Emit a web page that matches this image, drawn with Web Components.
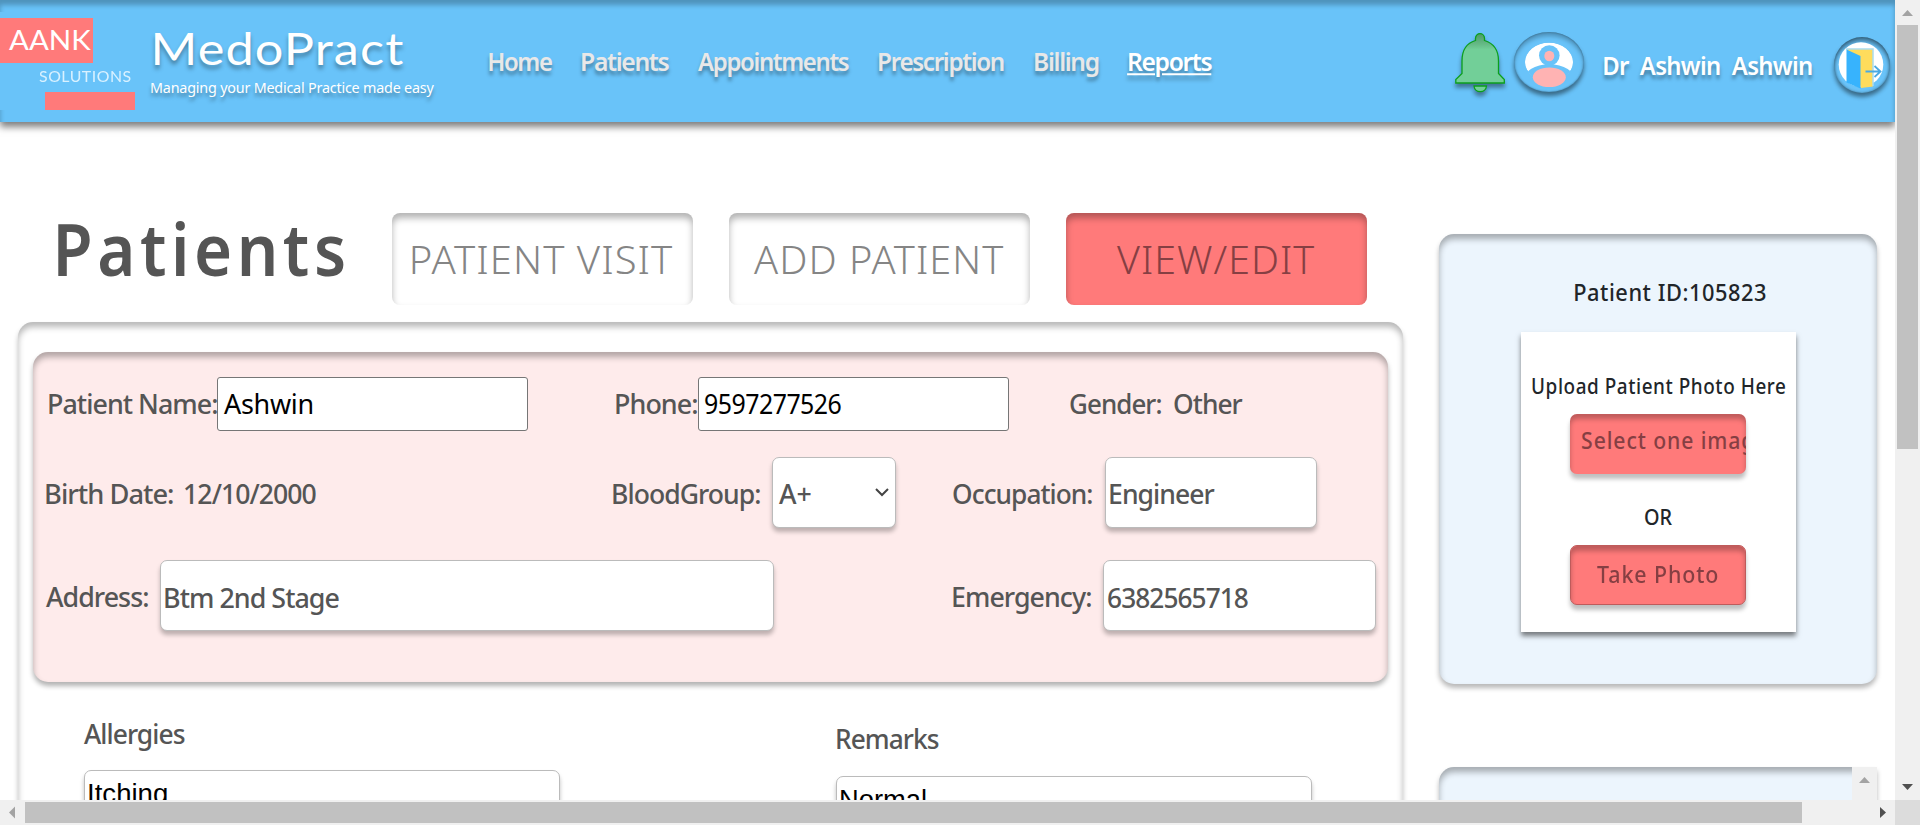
<!DOCTYPE html>
<html lang="en">
<head>
<meta charset="utf-8">
<title>MedoPract - Patients</title>
<style>
html,body{margin:0;height:100%;overflow:hidden;background:#fff}
body{font-family:"Noto Sans","Open Sans",sans-serif;color:#555}
</style>
</head>
<body>
<medo-app></medo-app>
<script>
const ctx = document.createElement('canvas').getContext('2d');

/* A caption sized by its cap height and set to a given ink width. */
class FitText extends HTMLElement {
  connectedCallback() {
    if (this.shadowRoot) return;
    const root = this.attachShadow({mode: 'open'});
    root.innerHTML = `<style>
      :host{display:block;flex:none;white-space:nowrap}
      span{display:inline-block;transform-origin:0 50%;vertical-align:top}
      :host([underline]) span{text-decoration:underline 2px;text-underline-offset:2px}
    </style><span><slot></slot></span>`;
    const w = +this.getAttribute('w'), cap = +this.getAttribute('cap');
    const cs = getComputedStyle(this);
    const font = s => `${cs.fontWeight} ${s}px ${cs.fontFamily}`;
    ctx.font = font(100);
    const size = cap / (ctx.measureText('H').actualBoundingBoxAscent / 100);
    ctx.font = font(size);
    const ls = parseFloat(this.getAttribute('ls') || 0);
    const ws = parseFloat(this.getAttribute('ws') || 0);
    ctx.letterSpacing = ls + 'px';
    ctx.wordSpacing = ws + 'px';
    const m = ctx.measureText(this.textContent);
    ctx.letterSpacing = ctx.wordSpacing = '0px';
    const left = -m.actualBoundingBoxLeft, ink = m.actualBoundingBoxRight - left;
    const sx = w / ink;
    const dy = cap / 2 - (m.fontBoundingBoxAscent - m.fontBoundingBoxDescent) / 2;
    this.style.width = w + 'px';
    this.style.height = cap + 'px';
    const sp = root.querySelector('span');
    sp.style.cssText = `font-size:${size}px;line-height:${cap}px;letter-spacing:${ls}px;word-spacing:${ws}px;transform:translate(${-left * sx}px,${dy + .5}px) scaleX(${sx})`;
  }
}

const make = (tag, html) => customElements.define(tag, class extends HTMLElement {
  connectedCallback() {
    if (this.shadowRoot) return;
    const t = document.createElement('template');
    t.innerHTML = html;
    this.attachShadow({mode: 'open'}).append(t.content.cloneNode(true));
  }
});

customElements.define('fit-text', FitText);

make('brand-logo', `<style>
  :host{display:flex;flex-direction:column;width:135px;height:98px;margin-top:12px;padding-top:6px;box-sizing:border-box;background:#69c3f9;color:#fff;font-family:Lato,sans-serif;flex:none}
  .a{width:93px;height:45px;background:#ff7a7a;padding:12.5px 0 0 9px;box-sizing:border-box}
  .s{margin:7.5px 0 0 38.5px;color:#d9f1ff}
  .b{width:90px;height:18px;margin:10.5px 0 0 45px;background:#ff7a7a}
</style><div class="a"><fit-text w="82" cap="19.5" style="font-weight:400">AANK</fit-text></div>
<fit-text class="s" w="92" cap="11" ls=".5">SOLUTIONS</fit-text><div class="b"></div>`);

make('bell-icon', `<style>:host{display:block;width:50px;height:60px;flex:none}svg{display:block;overflow:visible;filter:drop-shadow(0 4px 2px rgba(0,0,0,.4))}</style>
<svg width="50" height="60" viewBox="0 0 50 60"><defs><linearGradient id="g" x2="0" y2="1"><stop stop-color="#4d9a68"/><stop offset=".22" stop-color="#66bb87"/><stop offset=".32" stop-color="#72cf98"/></linearGradient></defs>
<g fill="url(#g)" stroke="#0b9f1c" stroke-width="1.3"><path d="M.8 50V46.5L7 40.5V28C7 17 12 10 20.5 7.5V5.5C20.5-1 29.5-1 29.5 5.5V7.5C38 10 43.5 17 43.5 28V40.5L49.3 46.5V50Z"/><path d="M19 53H31.5C31 60.5 19.5 60.5 19 53Z" fill="#72cf98"/></g></svg>`);

make('avatar-icon', `<style>:host{display:block;box-sizing:border-box;width:70px;height:60px;border-radius:50%;overflow:hidden;flex:none;background:#69c3f9;box-shadow:0 4px 4px rgba(0,0,0,.45),inset 0 4px 4px rgba(0,0,0,.25),inset 0 0 2px rgba(0,0,0,.4)}svg{display:block}</style>
<svg width="70" height="60" viewBox="0 0 70 60"><defs><clipPath id="c"><ellipse cx="35" cy="30" rx="24.2" ry="19.4"/></clipPath></defs><g clip-path="url(#c)"><ellipse cx="35" cy="30" rx="24" ry="19.2" fill="#fff"/><ellipse cx="35.3" cy="49" rx="26" ry="16.8" fill="#69c3f9"/><ellipse cx="35.3" cy="23.5" rx="10.3" ry="10.3" fill="#69c3f9"/></g><ellipse cx="35.3" cy="24" rx="5" ry="5.3" fill="#ffb3b3"/><ellipse cx="35.3" cy="45.3" rx="16.5" ry="9.8" fill="#ffb3b3"/></svg>`);

make('exit-icon', `<style>:host{display:block;width:56px;height:56px;border-radius:50%;flex:none;background:#69c3f9;box-shadow:0 4px 4px rgba(0,0,0,.45),inset 0 4px 4px rgba(0,0,0,.4),inset 0 0 3px rgba(0,0,0,.35)}svg{display:block}</style>
<svg width="56" height="56" viewBox="0 0 56 56"><circle cx="27" cy="27.5" r="22.3" fill="#fff"/><path d="M16 46Q28 55 40 45L39 50 28 53Z" fill="#69c3f9"/><path d="M13 12H39V49.5L27 51Z" fill="#ffdc5c"/><path d="M13 13V12H39V49" fill="none" stroke="#a9dcee" stroke-width="1.5"/><path d="M12.5 12.5L26.5 19V51.5L12.5 45.5Z" fill="#37b3fd"/><path d="M31.5 34.5H46M40.5 29L46.5 34.5 40.5 40" fill="none" stroke="#4aa9e3" stroke-width="1.8"/></svg>`);

make('app-header', `<style>
  :host{display:flex;box-sizing:border-box;height:122px;width:1895px;padding-right:5px;background:#69c3f9;box-shadow:0 5px 7px rgba(0,0,0,.5),inset 0 5px 5px rgba(0,0,0,.25);color:#fff;text-shadow:0 4px 4px rgba(0,0,0,.35)}
  .t{margin:31px 0 0 16px;width:283px;flex:none}
  nav{display:flex;gap:30px;margin:53px 0 0 54.5px;color:#e8e8e8;font-weight:600}
  .on{color:#fff}
  .r{display:flex;margin-left:auto}
  brand-logo{text-shadow:none}
</style><brand-logo></brand-logo>
<div class="t"><fit-text w="248" cap="33" ls="1" style="font-family:Lato,sans-serif;margin-left:4px;margin-top:-.5px">MedoPract</fit-text><fit-text w="283" cap="11" ls="-.2" style="margin-top:18px">Managing your Medical Practice made easy</fit-text></div>
<nav><fit-text w="63" cap="18.5" ls="-1.4">Home</fit-text><fit-text w="87" cap="18.5" ls="-1.4">Patients</fit-text><fit-text w="151" cap="18.5" ls="-1.4" style="margin-left:-.5px">Appointments</fit-text><fit-text w="125" cap="18.5" ls="-1.4">Prescription</fit-text><fit-text w="64" cap="18.5" ls="-1.4" style="margin-left:1px">Billing</fit-text><fit-text class="on" underline w="83" cap="18.5" ls="-1.4">Reports</fit-text></nav>
<div class="r"><bell-icon style="margin-top:33px"></bell-icon><avatar-icon style="margin:32px 0 0 9px"></avatar-icon><fit-text w="208" cap="18.5" ls="-.7" ws="6" style="margin:57px 0 0 20px;font-weight:600">Dr Ashwin Ashwin</fit-text><exit-icon style="margin:37px 0 0 22px"></exit-icon></div>`);

make('tab-button', `<style>
  :host{display:flex;box-sizing:border-box;justify-content:center;width:301px;height:92px;padding-top:34px;border-radius:8px;color:#858585;font-weight:300;box-shadow:inset 0 5px 7px rgba(0,0,0,.3);flex:none}
  :host([active]){background:#ff7a7a;color:#863f43}
</style><slot></slot>`);

make('field-box', `<style>
  :host{display:flex;align-items:center;box-sizing:border-box;flex:none;height:71px;border:1px solid #bbb;border-radius:7px;background:#fff;padding-left:4px;box-shadow:0 4px 4px rgba(0,0,0,.25)}
  :host([plain]){height:54px;border-color:#767676;border-radius:3px;padding-left:6px;box-shadow:none;color:#000;font-weight:400}
  :host([area]){align-items:flex-start;height:90px;width:476px;padding:11.5px 0 0 4px;color:#000;font-family:"Liberation Sans",Arial,sans-serif;font-weight:400}
</style><slot></slot>`);

make('patient-details', `<style>
  :host{display:block;box-sizing:border-box;width:1355px;height:330px;padding-top:25px;background:#feebeb;border-radius:15px;box-shadow:0 4px 5px rgba(0,0,0,.3),inset 0 5px 6px rgba(0,0,0,.3)}
  .row{display:flex;align-items:center;height:71px;padding-left:12.5px}
  .one{height:54px;padding-left:16px;margin-bottom:26px}
  .one fit-text{margin-top:-2px}
  .two{margin-bottom:32px}
  svg{margin-left:64px}
</style>
<div class="row one"><fit-text w="168" cap="20" ls="-1">Patient Name:</fit-text><field-box plain style="width:311px;"><fit-text w="88" cap="20" ls="-.3">Ashwin</fit-text></field-box><fit-text w="81" cap="20" ls="-1" style="margin-left:88px">Phone:</fit-text><field-box plain style="width:311px;margin-left:1px"><fit-text w="136" cap="20" ls="-.6">9597277526</fit-text></field-box><fit-text w="91" cap="20" ls="-1" style="margin-left:61px">Gender:</fit-text><fit-text w="69" cap="20" ls="-1" style="margin-left:13px">Other</fit-text></div>
<div class="row two"><fit-text w="127" cap="20" ls="-1">Birth Date:</fit-text><fit-text w="131" cap="20" ls="-1" style="margin-left:12px">12/10/2000</fit-text><fit-text w="147" cap="20" ls="-1" style="margin-left:297.5px">BloodGroup:</fit-text><field-box style="width:124px;margin-left:12px;padding-left:6px"><fit-text w="32" cap="20">A+</fit-text><svg width="14" height="9" viewBox="0 0 14 9"><path d="M1 1L7 7 13 1" fill="none" stroke="#444" stroke-width="2"/></svg></field-box><fit-text w="139" cap="20" ls="-1" style="margin-left:57px">Occupation:</fit-text><field-box style="width:212px;margin-left:13px"><fit-text w="105" cap="20" ls="-1">Engineer</fit-text></field-box></div>
<div class="row"><fit-text w="102" cap="20" ls="-1">Address:</fit-text><field-box style="width:614px;margin-left:12.5px"><fit-text w="174" cap="20" ls="-1" style="margin-top:2px">Btm 2nd Stage</fit-text></field-box><fit-text w="138" cap="20" ls="-1" style="margin-left:179px">Emergency:</fit-text><field-box style="width:273px;margin-left:12px"><fit-text w="140" cap="20" ls="-1" style="margin-top:2px">6382565718</fit-text></field-box></div>`);

make('patient-card', `<style>
  :host{display:block;box-sizing:border-box;width:1385px;height:560px;padding:30px 0 0 15px;border-radius:15px;box-shadow:0 4px 5px rgba(0,0,0,.25),inset 0 5px 6px rgba(0,0,0,.28)}
  :host{font-weight:500}
  .n{display:flex;padding-left:51px;gap:276px;align-items:flex-start}
</style><patient-details></patient-details>
<div class="n"><div style="margin-top:41px"><fit-text w="101" cap="20" ls="-1">Allergies</fit-text><field-box area style="margin-top:27px"><fit-text w="78" cap="19">Itching</fit-text></field-box></div>
<div style="margin-top:46px"><fit-text w="102" cap="20" ls="-1" style="margin-left:1px">Remarks</fit-text><field-box area style="margin-top:28px"><fit-text w="85" cap="19">Normal</fit-text></field-box></div></div>`);

make('side-panel', `<style>
  :host{display:block;position:relative;box-sizing:border-box;width:438px;height:450px;background:#ecf5fd;border-radius:15px;box-shadow:0 4px 5px rgba(0,0,0,.28),inset 0 5px 6px rgba(0,0,0,.3);color:#212529}
  :host([bar]){border-top-right-radius:0}
</style><slot></slot>`);

make('photo-upload', `<style>
  :host{display:flex;flex-direction:column;align-items:center;box-sizing:border-box;width:275px;height:300px;margin:31px 0 0 82px;background:#fff;box-shadow:0 4px 5px rgba(0,0,0,.5);padding:47px 1px 0 0}
  .b{display:flex;box-sizing:border-box;width:176px;height:60px;border-radius:7px;background:#ff7a7a;color:#863f43;overflow:hidden;box-shadow:0 5px 4px rgba(0,0,0,.25),inset 0 5px 5px rgba(0,0,0,.25);padding:18.5px 0 0 12px;margin-top:20px;font-weight:500}
  .p{border:1px solid #bf5b5b;padding:20.5px 0 0 26px}
</style><fit-text w="253" cap="15" ls=".6" style="font-weight:500">Upload Patient Photo Here</fit-text><div class="b"><fit-text w="185" cap="17" ls="1">Select one image</fit-text></div><fit-text w="27" cap="15" style="margin-top:36px;font-weight:500">OR</fit-text><div class="b p"><fit-text w="121" cap="17" ls="1">Take Photo</fit-text></div>`);

make('v-scrollbar', `<style>:host{display:flex;flex-direction:column;justify-content:space-between;align-items:center;background:#f0f0f0;width:25px}
.t{width:21px;height:424px;background:#c1c1c1;margin-bottom:auto}svg{display:block;flex:none}</style>
<svg width="25" height="25"><path d="M7 16L12.5 10 18 16Z" fill="#a3a3a3"/></svg><div class="t"></div><svg width="25" height="25"><path d="M7 9L12.5 15 18 9Z" fill="#505050"/></svg>`);

make('h-scrollbar', `<style>:host{display:flex;align-items:center;background:#f0f0f0;height:25px}
.t{width:1777px;height:21px;background:#c1c1c1;margin-right:auto}svg{display:block;flex:none}i{width:25px;height:25px;background:#dcdcdc}</style>
<svg width="25" height="25"><path d="M15 6.5L9 12.5 15 18.5Z" fill="#a3a3a3"/></svg><div class="t"></div><svg width="25" height="25"><path d="M10 7L16 12.5 10 18Z" fill="#505050"/></svg><i></i>`);

make('medo-app', `<style>
  :host{display:grid;grid-template:800px 25px/1895px 25px;width:1920px;height:825px;overflow:hidden}
  .page{overflow:hidden;height:800px}
  .cols{display:flex;gap:36px;padding-left:18px}
  .tabs{display:flex;align-items:flex-start;padding:91px 0 0 40px;height:109px}
  h-scrollbar{grid-column:1/3}
  .side{padding-top:112px}
  .bar{position:absolute;right:0;top:0;width:25px;height:100%;background:#f0f0f0}
  .bar svg{display:block}
</style>
<div class="page"><app-header></app-header>
<div class="cols"><main><div class="tabs"><fit-text w="286" cap="51.5" ls="5" style="margin-top:11px;font-weight:600">Patients</fit-text><tab-button style="margin-left:47.5px"><fit-text w="261" cap="27.5" ls="1">PATIENT VISIT</fit-text></tab-button><tab-button style="margin-left:36.5px"><fit-text w="250" cap="27.5" ls="1" style="margin-right:2px">ADD PATIENT</fit-text></tab-button><tab-button active style="margin-left:36px"><fit-text w="198" cap="27.5" ls="1" style="margin-right:2px">VIEW/EDIT</fit-text></tab-button></div><patient-card></patient-card></main>
<div class="side"><side-panel><fit-text w="191" cap="17" ls=".6" style="padding:49.5px 0 0 136px;font-weight:500">Patient ID:105823</fit-text><photo-upload></photo-upload></side-panel>
<side-panel bar style="margin-top:83px"><div class="bar"><svg width="25" height="25"><path d="M7 16L12.5 10 18 16Z" fill="#a3a3a3"/></svg></div></side-panel></div></div></div>
<v-scrollbar></v-scrollbar><h-scrollbar></h-scrollbar>`);
</script>
</body>
</html>
